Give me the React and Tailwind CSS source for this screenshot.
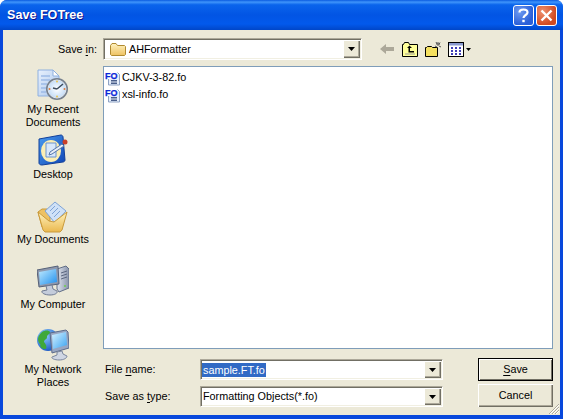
function Caret() {
  return <svg width="7" height="4" viewBox="0 0 7 4"><path d="M0 0h7L3.500 4z" fill="#000" /></svg>;
}
function ArrowBtn() {
  return (
    <div className="w-[17px] self-stretch flex items-center justify-center bg-[#ece9d8] shadow-[inset_1px_1px_0_#fff,inset_-1px_-1px_0_#716f64,inset_-2px_-2px_0_#aca899]">
      <Caret />
    </div>
  );
}
function Sunken({ className = "", children }) {
  return (
    <div className={"flex border border-t-[#aca899] border-l-[#aca899] border-r-white border-b-white bg-white p-px shadow-[inset_1px_1px_0_#716f64,inset_-1px_-1px_0_#f1efe2] " + className}>
      {children}
    </div>
  );
}
function FoIcon() {
  return (
    <svg width="16" height="16" viewBox="0 0 16 16" className="shrink-0">
      <path d="M3.500 1.500h8l3 3v10.500h-11z" fill="#e6eefa" stroke="#8fa3c4" />
      <path d="M6 10.500h6M6 12h6M6 13.500h6" stroke="#4a5f8a" />
      <rect x="0" y="1" width="12.500" height="8" fill="#fff" />
      <text x="0" y="8.500" fontFamily="'Liberation Sans'" fontWeight="700" fontSize="9" fill="#0a28d8" stroke="#0a28d8" strokeWidth=".25">FO</text>
    </svg>
  );
}
function RecentIcon() {
  return (
    <svg width="32" height="32" viewBox="0 0 32 32">
      <defs>
        <linearGradient id="rd" x1="0" y1="0" x2="1" y2="1"><stop offset="0" stopColor="#e8f1fd" /><stop offset="1" stopColor="#a9c5ec" /></linearGradient>
        <radialGradient id="rc" cx=".5" cy=".5" r=".6"><stop offset="0" stopColor="#fff" /><stop offset="1" stopColor="#b9d6f5" /></radialGradient>
      </defs>
      <path d="M1 1h15l6 6v20H1z" fill="url(#rd)" stroke="#8fb0df" />
      <path d="M16 1v6h6z" fill="#fff" stroke="#8fb0df" />
      <path d="M4 7h9M4 11h9M4 15h6M4 19h5M4 23h5" stroke="#9dbbe6" strokeWidth="1.500" />
      <circle cx="20" cy="20" r="11" fill="#76808d" />
      <circle cx="20" cy="20" r="9" fill="url(#rc)" stroke="#dfe6ee" />
      <path d="M20 20l6-5M20 20l-4-1" stroke="#3c4a5c" strokeWidth="1.500" />
      <circle cx="20" cy="12.500" r="1" fill="#e9c24c" /><circle cx="12.500" cy="20" r="1" fill="#e07a3a" /><circle cx="27.500" cy="20" r="1" fill="#e07a3a" /><circle cx="20" cy="27.500" r="1" fill="#e9c24c" />
    </svg>
  );
}
function DesktopIcon() {
  return (
    <svg width="32" height="32" viewBox="0 0 32 32">
      <defs>
        <linearGradient id="dk" x1="0" y1="0" x2="1" y2="1"><stop offset="0" stopColor="#4a9cf0" /><stop offset="1" stopColor="#0f45b5" /></linearGradient>
      </defs>
      <path d="M2 5L24 1c1 0 2 1 2 2l2 23c0 1-1 2-2 2L5 31c-2 0-3-1-3-2z" fill="url(#dk)" stroke="#123f99" />
      <ellipse cx="14" cy="17" rx="10" ry="11" fill="#fbeeb4" />
      <path d="M9 9h10v14H9z" fill="#d8e8fb" stroke="#6b93cf" />
      <path d="M13 18l12-8 2 2-12 8-3 1z" fill="#e8eef8" stroke="#5577aa" />
      <circle cx="28" cy="8" r="2.500" fill="#c8402a" />
    </svg>
  );
}
function DocsIcon() {
  return (
    <svg width="32" height="34" viewBox="0 0 32 34">
      <defs>
        <linearGradient id="df" x1="0" y1="0" x2="0" y2="1"><stop offset="0" stopColor="#fff3bf" /><stop offset="1" stopColor="#eab84e" /></linearGradient>
      </defs>
      <path d="M1 13l4-3h5l3 3v15H5z" fill="#edc163" stroke="#c99a3c" />
      <path d="M8 12L18 3l11 9-11 12z" fill="#cfe1f7" stroke="#7ea3d6" />
      <path d="M13 12l5-5M15 15l6-6M17 18l6-6" stroke="#7ea3d6" />
      <path d="M1 13l11 9 5 1 13-10-5 18-2 2H8l-2-2z" fill="url(#df)" stroke="#c99a3c" />
    </svg>
  );
}
function ComputerIcon() {
  return (
    <svg width="32" height="32" viewBox="0 0 32 32">
      <defs>
        <linearGradient id="cs" x1="0" y1="0" x2="1" y2="1"><stop offset="0" stopColor="#bfeaff" /><stop offset="1" stopColor="#1f8fee" /></linearGradient>
        <linearGradient id="cb" x1="0" y1="0" x2="1" y2="0"><stop offset="0" stopColor="#dfe4ee" /><stop offset="1" stopColor="#8792aa" /></linearGradient>
      </defs>
      <path d="M20 5l9-3 3 3v19l-10 4-2-3z" fill="url(#cb)" stroke="#626e86" />
      <path d="M24 9l6-2M24 12l6-2M24 15l6-2" stroke="#5b6780" />
      <circle cx="28" cy="22" r="1" fill="#6ccf4a" />
      <path d="M0 6l21-4 1 18-20 3z" fill="#8e98ae" stroke="#566178" />
      <path d="M2 8l17-3 1 13-17 3z" fill="url(#cs)" />
      <path d="M9 22l6-1 1 4 4 2c1 2-2 4-7 4s-9-2-8-4l5-1z" fill="#c4ccdb" stroke="#707b92" />
    </svg>
  );
}
function NetworkIcon() {
  return (
    <svg width="32" height="32" viewBox="0 0 32 32">
      <defs>
        <radialGradient id="ng" cx=".35" cy=".3" r=".8"><stop offset="0" stopColor="#8fd0ff" /><stop offset="1" stopColor="#124fc0" /></radialGradient>
        <linearGradient id="ns" x1="0" y1="0" x2="1" y2="1"><stop offset="0" stopColor="#d7f2ff" /><stop offset="1" stopColor="#3ba4f2" /></linearGradient>
      </defs>
      <circle cx="11" cy="11" r="11" fill="url(#ng)" />
      <path d="M5 3c3-2 7-2 8 0 0 3-3 2-3 5s-3 2-3 5c2 2 3 5 2 7-4-2-8-6-8-10 0-3 2-5 4-7zM3 16c2 0 6 3 5 4-3 0-5-2-5-4z" fill="#3fa83a" />
      <path d="M13 4l16-3 2 2 1 16-17 5z" fill="#98a6c2" stroke="#5c6b8a" />
      <path d="M15 6l14-3 1 13-14 4z" fill="url(#ns)" />
      <path d="M20 23l5-1 1 3 4 2c0 2-3 4-8 4s-8-2-7-3l5-2z" fill="#cfd6e3" stroke="#7b879e" />
    </svg>
  );
}
function Place({ icon, lines }) {
  return (
    <div className="h-[65px] pt-[3px] flex flex-col items-center">
      <div className="h-[34px] shrink-0 flex items-start justify-center">{icon}</div>
      {lines.map((l) => <div key={l} className="h-[13px] leading-[13px] whitespace-nowrap">{l}</div>)}
    </div>
  );
}
function U({ children }) {
  return <span className="underline underline-offset-2">{children}</span>;
}
export default function App() {
  return (
    <div className="w-[563px] h-[419px] flex flex-col rounded-t-[7px] overflow-hidden bg-[#0848dc] font-['Liberation_Sans',sans-serif] text-[10.8px] text-black">
      <div className="h-[30px] shrink-0 flex items-center pl-[7px] pr-[6px] bg-[linear-gradient(180deg,#0a5be0_0%,#3f95fb_7%,#0a64ec_16%,#0255e4_50%,#0259ec_80%,#0046c8_100%)]">
        <div className="flex-1 text-white font-bold text-[12.6px] [text-shadow:1px_1px_0_#0f1089]">Save FOTree</div>
        <div className="flex gap-[2px]">
          <div className="w-[21px] h-[21px] rounded-[3px] border border-white bg-[radial-gradient(circle_at_30%_30%,#6f9bf0,#2a5fd8_70%)] flex items-center justify-center">
            <svg width="11" height="15" viewBox="0 0 11 15" fill="none"><path d="M1.500 4.500C1.500 2.500 3.500 1.500 5.500 1.500S9.500 2.500 9.500 4.500C9.500 7 5.500 7 5.500 10" stroke="#fff" strokeWidth="2.200" /><rect x="4.300" y="11.800" width="2.400" height="2.400" fill="#fff" /></svg>
          </div>
          <div className="w-[21px] h-[21px] rounded-[3px] border border-white bg-[radial-gradient(circle_at_30%_30%,#f0916e,#cf4a22_70%)] flex items-center justify-center">
            <svg width="13" height="13" viewBox="0 0 13 13"><path d="M1.500 1.500l10 10M11.500 1.500l-10 10" stroke="#fff" strokeWidth="2.400" /></svg>
          </div>
        </div>
      </div>
      <div className="flex-1 flex mx-[3px] mb-[4px] bg-[#ece9d8] relative">
        <div className="w-[100px] shrink-0 pt-[36px] text-center">
          <Place icon={<RecentIcon />} lines={["My Recent", "Documents"]} />
          <Place icon={<DesktopIcon />} lines={["Desktop"]} />
          <Place icon={<DocsIcon />} lines={["My Documents"]} />
          <Place icon={<ComputerIcon />} lines={["My Computer"]} />
          <Place icon={<NetworkIcon />} lines={["My Network", "Places"]} />
        </div>
        <div className="relative flex-1 pr-[7px]">
          <div className="mt-[8px] h-[22px] flex items-center -ml-[45px]">
            <div className="w-[45px] shrink-0">Save <U>i</U>n:</div>
            <Sunken className="w-[259px] h-[22px]">
              <div className="flex-1 flex items-center gap-[3px] pl-[5px]">
                <svg width="16" height="14" viewBox="0 0 16 14"><defs><linearGradient id="fold" x1="0" y1="0" x2="0" y2="1"><stop offset="0" stopColor="#fff2c0" /><stop offset="1" stopColor="#eec262" /></linearGradient></defs><path d="M.5 3.500L2 1.500h4l1.500 2h7l1 1v8l-1 1H1.500l-1-1z" fill="url(#fold)" stroke="#b08a30" /></svg>
                <span>AHFormatter</span>
              </div>
              <ArrowBtn />
            </Sunken>
            <div className="flex items-center ml-[18px]">
              <svg width="15" height="12" viewBox="0 0 15 12" className="mr-[7px]"><path d="M0 6l6-5v3h8v4H6v3z" fill="#aca899" /></svg>
              <svg width="16" height="15" viewBox="0 0 16 15" className="mr-[7px]"><path d="M.5 14.500V2.500h1l1-2h4l1 2h8v12z" fill="#ffff99" stroke="#000" /><path d="M5 6l2.500-2.500L10 6H8v3h4v1.500H6.500V6z" fill="#000" /><path d="M3 12h10" stroke="#999" /></svg>
              <svg width="17" height="15" viewBox="0 0 17 15" className="mr-[6px]"><path d="M.5 14.500V5.500h1l1-1h4l1 1h5v9z" fill="#f4e060" stroke="#000" /><path d="M13 0v4M11 2h4M10 4l2 1M15 .5l-1 2M11 0l1 2M16 5l-2-1" stroke="#555" /></svg>
              <svg width="16" height="15" viewBox="0 0 16 15" className="mr-[2px]"><rect x=".5" y=".5" width="15" height="14" fill="#fff" stroke="#000" /><rect x="1" y="1" width="14" height="2.500" fill="#8a9ad0" /><path d="M3 6h2M7 6h2M11 6h2M3 9h2M7 9h2M11 9h2M3 12h2M7 12h2M11 12h2" stroke="#0000a0" strokeWidth="1.500" /></svg>
              <svg width="5" height="3" viewBox="0 0 5 3"><path d="M0 0h5L2.500 3z" fill="#000" /></svg>
            </div>
          </div>
          <div className="mt-[6px] h-[283px] border border-[#7f9db9] bg-white pl-[1px] pt-[2px]">
            <div className="h-[17px] flex items-center gap-[1px]"><FoIcon /><span>CJKV-3-82.fo</span></div>
            <div className="h-[17px] flex items-center gap-[1px]"><FoIcon /><span>xsl-info.fo</span></div>
          </div>
          <div className="mt-[9px] flex">
            <div className="w-[340px] shrink-0 pt-[1px]">
              <div className="flex items-center h-[21px]">
                <div className="w-[97px] pl-[2px] shrink-0">File <U>n</U>ame:</div>
                <Sunken className="w-[243px] h-[21px]">
                  <div className="flex-1 flex items-center"><span className="bg-[#316ac5] text-white leading-[14px] px-px">sample.FT.fo</span></div>
                  <ArrowBtn />
                </Sunken>
              </div>
              <div className="flex items-center h-[21px] mt-[6px]">
                <div className="w-[97px] pl-[2px] shrink-0">Save as <U>t</U>ype:</div>
                <Sunken className="w-[243px] h-[21px]">
                  <div className="flex-1 flex items-center pl-[1px]">Formatting Objects(*.fo)</div>
                  <ArrowBtn />
                </Sunken>
              </div>
            </div>
            <div className="ml-[35px] w-[75px] flex flex-col gap-[3px]">
              <div className="h-[23px] flex items-center justify-center border border-black bg-[#ece9d8] shadow-[inset_1px_1px_0_#fff,inset_-1px_-1px_0_#716f64]"><span><U>S</U>ave</span></div>
              <div className="h-[23px] flex items-center justify-center bg-[#ece9d8] shadow-[inset_1px_1px_0_#fff,inset_-1px_-1px_0_#716f64,inset_-2px_-2px_0_#aca899]">Cancel</div>
            </div>
          </div>
        </div>
        <svg width="12" height="12" viewBox="0 0 12 12" className="absolute right-0 bottom-0"><path d="M11 1L1 11M11 4L4 11M11 7L7 11" stroke="#aca899" /><path d="M11 2L2 11M11 5L5 11M11 8L8 11" stroke="#fff" /></svg>
      </div>
    </div>
  );
}
